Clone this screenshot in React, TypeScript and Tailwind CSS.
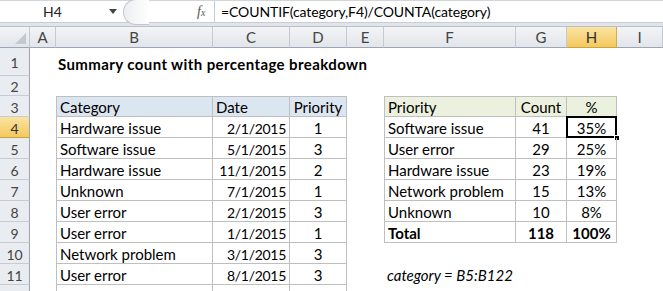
import React from "react";

type Row = {
  n: number;
  b?: string;
  c?: string;
  d?: string;
  f?: string;
  g?: string;
  h?: string;
};

const rows: Row[] = [
  { n: 4, b: "Hardware issue", c: "2/1/2015", d: "1", f: "Software issue", g: "41", h: "35%" },
  { n: 5, b: "Software issue", c: "5/1/2015", d: "3", f: "User error", g: "29", h: "25%" },
  { n: 6, b: "Hardware issue", c: "11/1/2015", d: "2", f: "Hardware issue", g: "23", h: "19%" },
  { n: 7, b: "Unknown", c: "7/1/2015", d: "1", f: "Network problem", g: "15", h: "13%" },
  { n: 8, b: "User error", c: "2/1/2015", d: "3", f: "Unknown", g: "10", h: "8%" },
  { n: 9, b: "User error", c: "1/1/2015", d: "1", f: "Total", g: "118", h: "100%" },
  { n: 10, b: "Network problem", c: "3/1/2015", d: "3" },
  { n: 11, b: "User error", c: "8/1/2015", d: "3" },
  { n: 12, b: "", c: "", d: "" },
];

const letters = ["A", "B", "C", "D", "E", "F", "G", "H", "I"];

const line = "border-[#bfbfbf]";

function RowHead({ n, active }: { n: number | string; active?: boolean }) {
  return (
    <div
      className={
        active
          ? "flex items-center justify-center border-r border-b border-r-[#9ba5b3] border-b-[#c9a33f] bg-gradient-to-b from-[#fbe3a0] to-[#f4c95c] pt-[2px] text-[14px] text-[#333]"
          : "flex items-center justify-center border-r border-b border-r-[#9ba5b3] border-b-[#c8ccd2] bg-[#e9ecf0] pt-[2px] text-[14px] text-[#444]"
      }
    >
      {n}
    </div>
  );
}

export default function App() {
  return (
    <div
      className="w-[663px] h-[291px] overflow-hidden bg-white text-black"
      style={{ fontFamily: "Lato, 'Open Sans', sans-serif" }}
    >
      {/* formula bar */}
      <div className="flex h-[22px] items-center border-t border-[#d2d6dc] bg-white">
        <div className="w-[105px] text-center text-[14px] text-[#222]">H4</div>
        <svg width="8" height="5" viewBox="0 0 8 5" className="ml-[4px]">
          <path d="M0 0 L8 0 L4 5 Z" fill="#444" />
        </svg>
        <div className="ml-[6px] h-[26px] w-[26px] rounded-l-full border-l border-t border-b border-[#c3c7cd] bg-gradient-to-r from-[#eceef1] to-white" />
        <div
          className="ml-[48px] w-[14px] text-[14px] italic text-[#555]"
          style={{ fontFamily: "'Liberation Serif', serif" }}
        >
          f<span className="text-[10px]">x</span>
        </div>
        <div className="ml-[3px] h-full border-l border-[#c6cbd2]" />
        <div className="pl-[6px] text-[14px] tracking-[-0.1px] text-black">
          =COUNTIF(category,F4)/COUNTA(category)
        </div>
      </div>
      <div className="h-[5px] border-t border-b border-t-[#c9ced6] border-b-[#b9c0ca] bg-[#e1e5ea]" />

      {/* sheet */}
      <div className="grid grid-cols-[30px_26px_157px_77px_57px_37px_132px_51px_50px_1fr] grid-rows-[21px_28px_20px_repeat(10,21px)]">
        {/* column headers */}
        <div className="relative border-r border-b border-r-[#c5cad1] border-b-[#9ba5b3] bg-gradient-to-b from-[#f3f4f6] to-[#e2e5e9]">
          <svg width="11" height="11" viewBox="0 0 11 11" className="absolute bottom-[3px] right-[3px]">
            <path d="M11 0 L11 11 L0 11 Z" fill="#c4c8cd" />
          </svg>
        </div>
        {letters.map((l) => (
          <div
            key={l}
            className={
              l === "H"
                ? "flex items-center justify-center border-r border-b border-r-[#d1ab4d] border-b-[#c9a33f] bg-gradient-to-b from-[#fbe3a0] to-[#f4c95c] text-[15px] text-[#333]"
                : "flex items-center justify-center border-r border-b border-r-[#c5cad1] border-b-[#9ba5b3] bg-gradient-to-b from-[#f3f4f6] to-[#e2e5e9] text-[15px] text-[#444]"
            }
          >
            {l}
          </div>
        ))}

        {/* row 1 */}
        <RowHead n={1} />
        <div />
        <div className="col-span-8 flex items-end whitespace-nowrap pb-[1px] pl-[2px] text-[15px] font-bold tracking-[0.4px]">
          Summary count with percentage breakdown
        </div>

        {/* row 2 */}
        <RowHead n={2} />
        <div className="col-span-9" />

        {/* row 3: headers */}
        <RowHead n={3} />
        <div />
        <div className={`flex items-center border border-t border-l ${line} bg-[#dce6f1] pl-[3px] pt-[2px] text-[15px]`}>Category</div>
        <div className={`flex items-center border-t border-r border-b ${line} bg-[#dce6f1] pl-[3px] pt-[2px] text-[15px]`}>Date</div>
        <div className={`flex items-center justify-center border-t border-r border-b ${line} bg-[#dce6f1] pt-[2px] text-[15px]`}>Priority</div>
        <div />
        <div className={`flex items-center border border-t border-l ${line} bg-[#ebf1de] pl-[3px] pt-[2px] text-[15px]`}>Priority</div>
        <div className={`flex items-center justify-center border-t border-r border-b ${line} bg-[#ebf1de] pt-[2px] text-[15px]`}>Count</div>
        <div className={`flex items-center justify-center border-t border-r border-b ${line} bg-[#ebf1de] pt-[2px] text-[15px]`}>%</div>
        <div />

        {rows.map((r) => {
          const inRight = r.f !== undefined;
          const total = r.f === "Total";
          return (
            <React.Fragment key={r.n}>
              <RowHead n={r.n === 12 ? "" : r.n} active={r.n === 4} />
              <div />
              <div className={`flex items-center whitespace-nowrap border-l border-r border-b ${line} pl-[3px] pt-[2px] text-[15px]`}>{r.b}</div>
              <div className={`flex items-center justify-end border-r border-b ${line} pr-[3px] pt-[2px] text-[14px] tracking-[-0.3px]`}>{r.c}</div>
              <div className={`flex items-center justify-center border-r border-b ${line} pt-[2px] text-[15px]`}>{r.d}</div>
              <div />
              {inRight ? (
                <>
                  <div className={`flex items-center whitespace-nowrap border-l border-r border-b ${line} pl-[3px] pt-[2px] text-[15px] ${total ? "font-bold" : ""}`}>{r.f}</div>
                  <div className={`flex items-center justify-center border-r border-b ${line} pt-[2px] text-[15px] ${total ? "font-bold" : ""}`}>{r.g}</div>
                  <div className={`relative flex items-center justify-center border-r border-b ${line} pt-[2px] text-[15px] ${total ? "font-bold" : ""}`}>
                    {r.h}
                    {r.n === 4 && (
                      <>
                        <div className="absolute -top-[1px] -left-[1px] -right-[1px] -bottom-[1px] border-2 border-black" />
                        <div className="absolute -bottom-[4px] -right-[4px] h-[6px] w-[6px] border border-white bg-black" />
                      </>
                    )}
                  </div>
                </>
              ) : r.n === 11 ? (
                <div className="col-span-3 flex items-center whitespace-nowrap pl-[3px] pt-[2px] text-[15px] italic">
                  category = B5:B122
                </div>
              ) : (
                <div className="col-span-3" />
              )}
              <div />
            </React.Fragment>
          );
        })}
      </div>
    </div>
  );
}
